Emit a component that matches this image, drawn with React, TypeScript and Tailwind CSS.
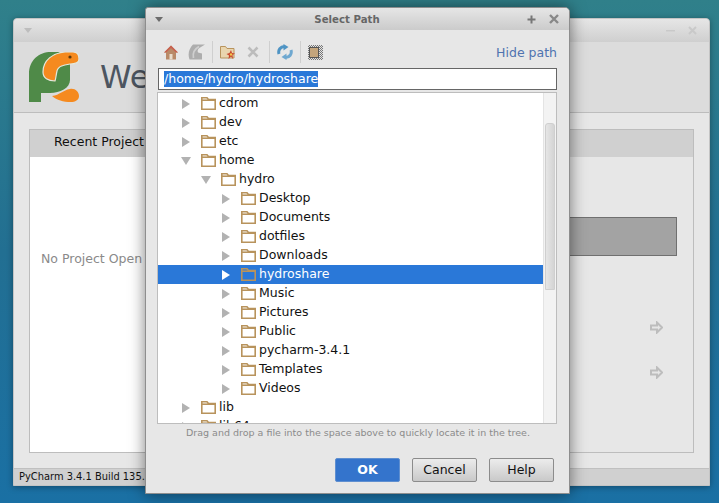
const FONT = "[font-family:'DejaVu_Sans',sans-serif]";

function Folder() {
  return (
    <svg width="15" height="13" viewBox="0 0 15 13" className="shrink-0">
      <path d="M0.8 12.2V0.8H6L7.5 2.6H14.2V12.2Z" fill="none" stroke="#b8935c" strokeWidth="1.6" />
      <rect x="1" y="2.4" width="13" height="1.6" fill="#b8935c" />
    </svg>
  );
}

function Arrow({ open, white }: { open?: boolean; white?: boolean }) {
  const color = white ? "#ffffff" : "#b2b2b2";
  return (
    <svg width="10" height="10" viewBox="0 0 10 10" className="shrink-0">
      {open ? <path d="M0 1H10L5 9Z" fill={color} /> : <path d="M1 0L9 5L1 10Z" fill={color} />}
    </svg>
  );
}

const rows: { name: string; level: number; open?: boolean; selected?: boolean }[] = [
  { name: "cdrom", level: 0 },
  { name: "dev", level: 0 },
  { name: "etc", level: 0 },
  { name: "home", level: 0, open: true },
  { name: "hydro", level: 1, open: true },
  { name: "Desktop", level: 2 },
  { name: "Documents", level: 2 },
  { name: "dotfiles", level: 2 },
  { name: "Downloads", level: 2 },
  { name: "hydroshare", level: 2, selected: true },
  { name: "Music", level: 2 },
  { name: "Pictures", level: 2 },
  { name: "Public", level: 2 },
  { name: "pycharm-3.4.1", level: 2 },
  { name: "Templates", level: 2 },
  { name: "Videos", level: 2 },
  { name: "lib", level: 0 },
  { name: "lib64", level: 0 },
];

function TreeRow({ name, level, open, selected }: (typeof rows)[number]) {
  const indent = level === 0 ? "pl-[23px]" : level === 1 ? "pl-[43px]" : "pl-[63px]";
  return (
    <div className={`h-[19px] shrink-0 flex items-center ${indent} ${selected ? "bg-[#2a78d8] text-white" : "text-[#111]"}`}>
      <Arrow open={open} white={selected} />
      <span className="ml-[10px]"><Folder /></span>
      <span className="ml-[3px] text-[12.5px] leading-none">{name}</span>
    </div>
  );
}

function Logo() {
  return (
    <svg width="50" height="50" viewBox="0 0 50 50" className="shrink-0">
      <path d="M0 50V22C0 8 10 0 22 0H30L41 12V28C41 36 31 41 21 41H12V50Z" fill="#4f8a48" />
      <path d="M14 20C14 8 24 1 36 0H44C48 0 50 3 50 7C50 11 46 12 41 12C35 13 29 14 28 19C27 23 27 26 26 29C19 29 14 26 14 20Z" fill="#f58a1f" stroke="#e3e8dc" strokeWidth="1.2" />
      <circle cx="41" cy="5" r="1.6" fill="#5a3a10" />
      <path d="M23 44C31 43 34 38 41 37C46 36 50 40 50 44C50 48 46 50 42 50C34 50 28 48 23 44Z" fill="#f58a1f" />
    </svg>
  );
}

function GoArrow() {
  return (
    <svg width="13" height="13" viewBox="0 0 13 13">
      <path d="M1 4.5H7V1.5L12 6.5L7 11.5V8.5H1Z" fill="#e6e6e6" stroke="#bdbdbd" strokeWidth="2" />
    </svg>
  );
}

function Toolbar() {
  return (
    <div className="h-[24px] mt-[10px] ml-[18px] mr-[12px] flex items-center">
      <svg width="14" height="15" viewBox="0 0 14 15" className="shrink-0">
        <path d="M7 0.5L0 7.5H2V14.5H12V7.5H14Z" fill="#b98a68" />
        <path d="M7 0.5L0 7.5H2L7 3L12 7.5H14Z" fill="#c9604f" />
        <rect x="5.5" y="9" width="3" height="5.5" fill="#e8dccb" />
      </svg>
      <svg width="17" height="16" viewBox="0 0 17 16" className="shrink-0 ml-[10px]">
        <path d="M5 0.5H17L13 3C10 4.5 9 6.5 10 8.5L14 9.5V15.5H1.5C-0.5 10 1 4.5 5 0.5Z" fill="#adadad" />
        <path d="M5.5 14C4.5 9 6.5 5 11 2.5" fill="none" stroke="#cfcfcf" strokeWidth="1.8" />
      </svg>
      <div className="w-px h-[22px] bg-[#cfcfcf] ml-[7px]" />
      <svg width="16" height="15" viewBox="0 0 16 15" className="shrink-0 ml-[7px]">
        <path d="M0.5 13V1.5H5.5L7 3.5H14V13Z" fill="#e9d5ae" stroke="#b8935c" />
        <path d="M11 5L12 8L15 8.5L12.5 10L13 14L11 11.5L8.5 14L9 10.5L6.5 9L9.5 8Z" fill="#c8452c" />
        <circle cx="11" cy="9.5" r="1.2" fill="#f3c84a" />
      </svg>
      <svg width="12" height="12" viewBox="0 0 12 12" className="shrink-0 ml-[11px]">
        <path d="M1.5 1.5L10.5 10.5M10.5 1.5L1.5 10.5" stroke="#bcbcbc" strokeWidth="2.6" />
      </svg>
      <div className="w-px h-[22px] bg-[#cfcfcf] ml-[10px]" />
      <svg width="16" height="16" viewBox="0 0 16 16" className="shrink-0 ml-[7px]">
        <path d="M2 10C0.8 6 3.5 2.5 7.5 2.5" fill="none" stroke="#4f94c4" strokeWidth="3" />
        <path d="M6.5 0L11.5 3L6.5 6.5Z" fill="#4f94c4" />
        <path d="M14 6C15.2 10 12.5 13.5 8.5 13.5" fill="none" stroke="#6fa8d0" strokeWidth="3" />
        <path d="M9.5 16L4.5 13L9.5 9.5Z" fill="#6fa8d0" />
      </svg>
      <div className="w-px h-[22px] bg-[#cfcfcf] ml-[7px]" />
      <div className="shrink-0 ml-[7px] w-[15px] h-[15px] bg-[repeating-conic-gradient(#777_0_25%,#e4e4e4_0_50%)] bg-[length:2px_2px] flex items-center justify-start pl-px">
        <div className="w-[10px] h-[11px] bg-[#c4a57c] border border-[#555]" />
      </div>
      <span className="ml-auto pt-[2px] text-[12.5px] text-[#4f73b0]">Hide path</span>
    </div>
  );
}

function Dialog() {
  return (
    <div className="absolute left-[145px] top-[7px] w-[425px] h-[487px] flex flex-col bg-[#e7e7e7] border border-[#8e8e8e] rounded-tr-[5px] rounded-tl-[3px] shadow-[0_0_16px_rgba(0,0,0,0.5)]">
      <div className="h-[22px] shrink-0 flex items-center px-[9px] bg-gradient-to-b from-[#e6e6e6] to-[#cbcbcb] rounded-t-[4px]">
        <svg width="8" height="5" viewBox="0 0 8 5"><path d="M0 0H8L4 5Z" fill="#6c6c6c" /></svg>
        <span className="flex-1 text-center text-[10.2px] font-bold text-[#666] pl-[5px] pt-[2px]">Select Path</span>
        <svg width="11" height="11" viewBox="0 0 11 11"><path d="M5.5 1.5V9.5M1.5 5.5H9.5" stroke="#777" strokeWidth="2" /></svg>
        <svg width="10" height="10" viewBox="0 0 10 10" className="ml-[12px] mr-[1px]"><path d="M1 1L9 9M9 1L1 9" stroke="#888" strokeWidth="2.4" /></svg>
      </div>
      <Toolbar />
      <div className="h-[22px] mt-[4px] ml-[12px] mr-[12px] shrink-0 bg-white border border-[#666] flex items-center pl-[5px]">
        <span className="bg-[#2a78d8] text-white text-[12.5px] leading-[16px]">/home/hydro/hydroshare</span>
      </div>
      <div className="h-[332px] mt-[2px] ml-[11px] mr-[12px] shrink-0 bg-white border border-[#bdbdbd] flex overflow-hidden">
        <div className="flex-1 flex flex-col overflow-hidden pt-px">
          {rows.map((r) => (
            <TreeRow key={r.name} {...r} />
          ))}
        </div>
        <div className="w-[13px] shrink-0 bg-[#f3f3f3] border-l border-[#e4e4e4] pt-[30px] pl-[1px]">
          <div className="w-[10px] h-[167px] rounded-t-[3px] bg-gradient-to-r from-[#e6e6e6] to-[#d4d4d4] border border-[#cfcfcf]" />
        </div>
      </div>
      <div className="mt-[2px] ml-[12px] mr-[12px] text-center text-[9.5px] leading-[14px] text-[#8b8b8b] pl-[1px]">
        Drag and drop a file into the space above to quickly locate it in the tree.
      </div>
      <div className="mt-[18px] mr-[15px] flex justify-end gap-[12px]">
        <button className="w-[65px] h-[24px] rounded-[2px] bg-[#3474cc] border border-[#5f8fd0] text-white text-[12.5px] font-bold">OK</button>
        <button className="w-[65px] h-[24px] rounded-[2px] bg-gradient-to-b from-[#ececec] to-[#c9c9c9] border border-[#8c8c8c] text-[#111] text-[12.5px]">Cancel</button>
        <button className="w-[65px] h-[24px] rounded-[2px] bg-gradient-to-b from-[#ececec] to-[#c9c9c9] border border-[#8c8c8c] text-[#111] text-[12.5px]">Help</button>
      </div>
    </div>
  );
}

function WelcomeWindow() {
  return (
    <div className="absolute left-[13px] top-[18px] w-[697px] h-[468px] flex flex-col bg-[#e7e7e7] rounded-t-[4px] border border-[#c4c4c4] shadow-[0_1px_6px_rgba(0,0,0,0.35)]">
      <div className="h-[23px] shrink-0 flex items-center px-[10px] bg-gradient-to-b from-[#e6e6e6] to-[#cfcfcf] rounded-t-[4px]">
        <svg width="8" height="5" viewBox="0 0 8 5"><path d="M0 0H8L4 5Z" fill="#bdbdbd" /></svg>
        <svg width="9" height="3" viewBox="0 0 9 3" className="ml-auto"><rect width="9" height="1.5" y="1" fill="#c9c9c9" /></svg>
        <svg width="9" height="9" viewBox="0 0 9 9" className="ml-[13px] mr-[2px]"><path d="M1 1L8 8M8 1L1 8" stroke="#c9c9c9" strokeWidth="2" /></svg>
      </div>
      <div className="h-[71px] shrink-0 flex items-center pl-[15px] bg-[#dcdcdc] border-b border-[#bdbdbd]">
        <Logo />
        <span className="ml-[21px] text-[32px] leading-none text-[#4d5560]">We</span>
      </div>
      <div className="mt-[16px] mx-[15px] h-[324px] shrink-0 flex flex-col border border-[#bdbdbd]">
        <div className="h-[27px] shrink-0 flex items-center pl-[24px] pb-[2px] bg-[#d0d0d0] text-[12.5px] text-[#111]">Recent Project</div>
        <div className="flex-1 flex">
          <div className="w-[300px] bg-white pl-[11px] pt-[93px] text-[12.5px] text-[#8a8a8a]">No Project Open</div>
          <div className="flex-1 flex flex-col items-end pt-[60px] pr-[16px]">
            <div className="w-full h-[39px] bg-[#a3a3a3] border border-[#707070]" />
            <div className="mt-[65px] mr-[14px]"><GoArrow /></div>
            <div className="mt-[32px] mr-[14px]"><GoArrow /></div>
          </div>
        </div>
      </div>
      <div className="mt-auto h-[17px] shrink-0 flex items-center pl-[5px] bg-[#d0d0d0] border-t border-[#c0c0c0] text-[9.9px] text-[#111]">PyCharm 3.4.1 Build 135.</div>
    </div>
  );
}

export default function App() {
  return (
    <div className={`relative w-[719px] h-[503px] overflow-hidden bg-gradient-to-b from-[#30808a] via-[#226f92] to-[#1a70a4] ${FONT}`}>
      <WelcomeWindow />
      <Dialog />
    </div>
  );
}
